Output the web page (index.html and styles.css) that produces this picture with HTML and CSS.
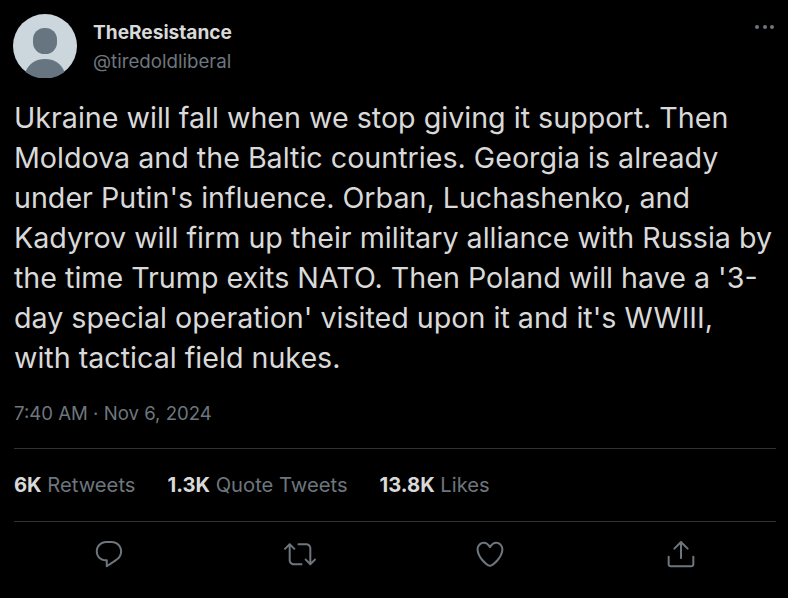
FILE: index.html
```html
<!DOCTYPE html>
<html lang="en">
<head>
<meta charset="utf-8">
<title>Tweet</title>
<link rel="stylesheet" href="styles.css">
</head>
<body>
<main class="tweet">
  <header class="author">
    <svg class="avatar" viewBox="0 0 64 64" aria-hidden="true">
      <circle cx="32" cy="32" r="32" fill="#ccd6dd"/>
      <rect x="20" y="14" width="24" height="26" rx="11.5" fill="#66757f"/>
      <path d="M12.5 58C16 49 23 45 32 45s16 4 19.5 13A32 32 0 0 1 12.5 58z" fill="#66757f"/>
    </svg>
    <div class="names">
      <div class="name">TheResistance</div>
      <div class="handle">@tiredoldliberal</div>
    </div>
    <div class="more"><span></span><span></span><span></span></div>
  </header>
  <p class="body">Ukraine will fall when we stop giving it support. Then<br>Moldova and the Baltic countries. Georgia is already<br>under Putin's influence. Orban, Luchashenko, and<br>Kadyrov will firm up their military alliance with Russia by<br>the time Trump exits NATO. Then Poland will have a '3-<br>day special operation' visited upon it and it's WWIII,<br>with tactical field nukes.</p>
  <div class="time">7:40 AM · Nov 6, 2024</div>
  <div class="stats">
    <span class="stat"><b>6K</b> Retweets</span>
    <span class="stat"><b>1.3K</b> Quote Tweets</span>
    <span class="stat"><b>13.8K</b> Likes</span>
  </div>
  <div class="actions">
    <svg class="icon" viewBox="0 0 24 24" aria-hidden="true"><path d="M14.046 2.242l-4.148-.01h-.002c-4.374 0-7.8 3.427-7.8 7.802 0 4.098 3.186 7.206 7.465 7.37v3.828c0 .108.044.286.12.403.142.225.384.347.632.347.138 0 .277-.038.402-.118.264-.168 6.473-4.14 8.088-5.506 1.902-1.61 3.04-3.97 3.043-6.312v-.017c-.006-4.367-3.43-7.787-7.8-7.788zm3.787 12.972c-1.134.96-4.862 3.405-6.772 4.643V16.67c0-.414-.335-.75-.75-.75h-.396c-3.66 0-6.318-2.476-6.318-5.886 0-3.534 2.768-6.302 6.3-6.302l4.147.01h.002c3.532 0 6.3 2.766 6.302 6.296-.003 1.91-.942 3.844-2.514 5.176z"/></svg>
    <svg class="icon" viewBox="0 0 24 24" aria-hidden="true"><path d="M23.77 15.67c-.292-.293-.767-.293-1.06 0l-2.22 2.22V7.65c0-2.068-1.683-3.75-3.75-3.75h-5.85c-.414 0-.75.336-.75.75s.336.75.75.75h5.85c1.24 0 2.25 1.01 2.25 2.25v10.24l-2.22-2.22c-.293-.293-.768-.293-1.06 0s-.294.768 0 1.06l3.5 3.5c.145.147.337.22.53.22s.383-.072.53-.22l3.5-3.5c.294-.292.294-.767 0-1.06zm-10.66 3.28H7.26c-1.24 0-2.25-1.01-2.25-2.25V6.46l2.22 2.22c.148.147.34.22.532.22s.384-.073.53-.22c.293-.293.293-.768 0-1.06l-3.5-3.5c-.293-.294-.768-.294-1.06 0l-3.5 3.5c-.294.292-.294.767 0 1.06s.767.293 1.06 0l2.22-2.22V16.7c0 2.068 1.683 3.75 3.75 3.75h5.85c.414 0 .75-.336.75-.75s-.337-.75-.75-.75z"/></svg>
    <svg class="icon" viewBox="0 0 24 24" aria-hidden="true"><path d="M12 21.638h-.014C9.403 21.59 1.95 14.856 1.95 8.478c0-3.064 2.525-5.754 5.403-5.754 2.29 0 3.83 1.58 4.646 2.73.814-1.148 2.354-2.73 4.645-2.73 2.88 0 5.404 2.69 5.404 5.755 0 6.376-7.454 13.11-10.037 13.157H12zM7.354 4.225c-2.08 0-3.903 1.988-3.903 4.255 0 5.74 7.034 11.596 8.55 11.658 1.518-.062 8.55-5.917 8.55-11.658 0-2.267-1.823-4.255-3.903-4.255-2.528 0-3.94 2.936-3.952 2.965-.23.562-1.156.562-1.387 0-.014-.03-1.425-2.965-3.954-2.965z"/></svg>
    <svg class="icon" viewBox="0 0 24 24" aria-hidden="true"><path d="M17.53 7.47l-5-5c-.293-.293-.768-.293-1.06 0l-5 5c-.294.293-.294.768 0 1.06s.767.294 1.06 0l3.72-3.72V15c0 .414.336.75.75.75s.75-.336.75-.75V4.81l3.72 3.72c.146.147.338.22.53.22s.384-.072.53-.22c.293-.293.293-.767 0-1.06z"/><path d="M19.708 21.944H4.292C3.028 21.944 2 20.916 2 19.652V14c0-.414.336-.75.75-.75s.75.336.75.75v5.652c0 .437.355.792.792.792h15.416c.437 0 .792-.355.792-.792V14c0-.414.336-.75.75-.75s.75.336.75.75v5.652c0 1.264-1.028 2.292-2.292 2.292z"/></svg>
  </div>
</main>
</body>
</html>
```

FILE: styles.css
```css
html, body {
  margin: 0;
  height: 100%;
  background: #000;
}
body {
  font-family: "Inter", "Liberation Sans", sans-serif;
  color: #d9d9d9;
  overflow: hidden;
}
.tweet {
  padding: 14px 12px 0 14px;
}
.author {
  display: flex;
  align-items: flex-start;
}
.avatar {
  width: 64px;
  height: 64px;
  margin-left: -1px;
  flex: none;
}
.names {
  margin-left: 16px;
  flex: 1;
  padding-top: 4px;
}
.name {
  font-size: 19.1px;
  line-height: 28px;
  font-weight: 700;
  color: #d9d9d9;
}
.handle {
  font-size: 18.7px;
  line-height: 32px;
  color: #6e767d;
}
.more {
  display: flex;
  gap: 3.5px;
  margin: 11px 2px 0 0;
}
.more span {
  width: 4px;
  height: 4px;
  border-radius: 50%;
  background: #6e767d;
}
.body {
  margin: 20px 0 0;
  font-size: 28.65px;
  line-height: 40px;
  color: #d9d9d9;
}
.time {
  margin-top: 22px;
  font-size: 18.6px;
  line-height: 26px;
  color: #6e767d;
}
.stats {
  margin-top: 22px;
  height: 74px;
  box-sizing: border-box;
  padding-bottom: 2px;
  border-top: 1px solid #2f3336;
  border-bottom: 1px solid #2f3336;
  display: flex;
  align-items: center;
  gap: 32px;
  font-size: 20.2px;
  color: #6e767d;
}
.stat b {
  color: #d9d9d9;
  font-weight: 700;
}
.actions {
  display: flex;
  justify-content: space-around;
  padding-top: 16px;
}
.icon {
  width: 32px;
  height: 32px;
  fill: #6e767d;
}
```
